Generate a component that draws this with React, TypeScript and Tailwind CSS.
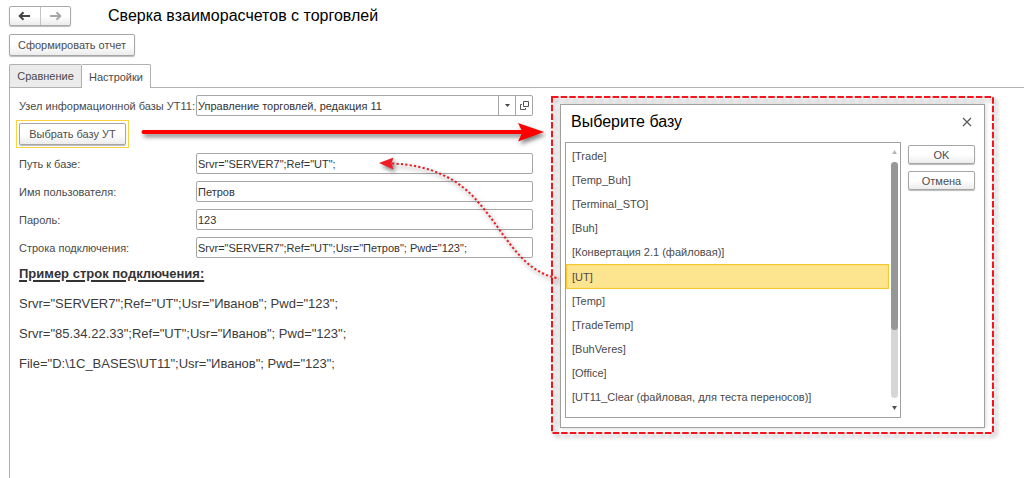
import { useState } from "react"
import { clsx } from "clsx"

const bases = [
    "[Trade]",
    "[Temp_Buh]",
    "[Terminal_STO]",
    "[Buh]",
    "[Конвертация 2.1 (файловая)]",
    "[UT]",
    "[Temp]",
    "[TradeTemp]",
    "[BuhVeres]",
    "[Office]",
    "[UT11_Clear (файловая, для теста переносов)]",
]

const fields = [
    { id: "path", label: "Путь к базе:", value: 'Srvr="SERVER7";Ref="UT";' },
    { id: "user", label: "Имя пользователя:", value: "Петров" },
    { id: "password", label: "Пароль:", value: "123" },
    { id: "connection", label: "Строка подключения:", value: 'Srvr="SERVER7";Ref="UT";Usr="Петров"; Pwd="123";' },
]

const examples = [
    'Srvr="SERVER7";Ref="UT";Usr="Иванов"; Pwd="123";',
    'Srvr="85.34.22.33";Ref="UT";Usr="Иванов"; Pwd="123";',
    'File="D:\\1C_BASES\\UT11";Usr="Иванов"; Pwd="123";',
]

const buttonStyle =
    "rounded-xs border border-[#a6a6a6] bg-linear-to-b from-white from-50% to-[#ececec] text-[#4d4d4d] shadow-[0_1px_1px_#bbb]"

function NavButtons() {
    return (
        <div className="flex h-5 w-[62px] rounded-xs border border-[#a9a9a9] bg-linear-to-b from-white from-50% to-[#ececec] shadow-[0_1px_1px_#bbb]">
            <button aria-label="Назад" className="flex flex-1 items-center justify-center border-r border-[#c4c4c4]">
                <svg width="13" height="10" viewBox="0 0 13 10" fill="none" stroke="#454545" strokeWidth="2">
                    <path d="M12 5H2M5.5 1.2L1.7 5l3.8 3.8" />
                </svg>
            </button>
            <button aria-label="Вперед" className="flex flex-1 items-center justify-center">
                <svg width="13" height="10" viewBox="0 0 13 10" fill="none" stroke="#a8a8a8" strokeWidth="2">
                    <path d="M1 5h10M7.5 1.2L11.3 5 7.5 8.8" />
                </svg>
            </button>
        </div>
    )
}

function BaseDialog() {
    const [selected, setSelected] = useState("[UT]")

    return (
        <div className="relative w-[443px] shrink-0 px-[9px] pt-2 pb-[6px]">
            {/* Пунктирная рамка */}
            <svg className="absolute inset-0 h-full w-full overflow-visible drop-shadow-[3px_3px_2px_rgba(0,0,0,0.35)]">
                <rect x="1" y="1" width="441" height="336" fill="none" stroke="#f5141b" strokeWidth="2" strokeDasharray="6.5 2.15" />
            </svg>

            <div role="dialog" aria-labelledby="dialog-title" className="relative border border-[#a0a0a0] bg-white px-1 pb-[9px] shadow-[0_0_5px_rgba(0,0,0,0.2)]">
                <div className="flex h-[37px] items-center justify-between pr-2 pb-[3px] pl-[6px]">
                    <h2 id="dialog-title" className="text-base leading-4 text-black">Выберите базу</h2>
                    <button aria-label="Закрыть">
                        <svg width="10" height="10" viewBox="0 0 10 10" stroke="#555" strokeWidth="1.2">
                            <path d="M1 1l8 8M9 1L1 9" />
                        </svg>
                    </button>
                </div>
                <div className="flex gap-[7px]">
                    <div className="flex h-[276px] w-[336px] border border-[#a0a0a0]">
                        <ul role="listbox" aria-label="Базы" className="flex-1 pt-px">
                            {bases.map((base) => (
                                <li
                                    key={base}
                                    role="option"
                                    aria-selected={base === selected}
                                    onClick={() => setSelected(base)}
                                    className={clsx(
                                        "flex items-center pl-[5px]",
                                        base === selected ? "h-[25px] border border-[#f8c82a] bg-[#fde590] shadow-[inset_0_0_1px_#f8c82a]" : "h-6 border-l border-transparent",
                                    )}
                                >
                                    {base}
                                </li>
                            ))}
                        </ul>
                        <div className="flex w-[11px] flex-col items-center pt-[7px] pb-[7px]">
                            <svg width="5" height="4" viewBox="0 0 5 4" fill="#b5b5b5">
                                <path d="M2.5 0L5 4H0z" />
                            </svg>
                            <div className="mt-2 mb-2 w-[7px] flex-1 rounded-full bg-[#d6d6d6]">
                                <div className="h-[168px] rounded-full bg-[#979797]"></div>
                            </div>
                            <svg width="5" height="4" viewBox="0 0 5 4" fill="#505050">
                                <path d="M0 0h5L2.5 4z" />
                            </svg>
                        </div>
                    </div>
                    <div className="flex flex-1 flex-col gap-[7px] pt-[3px] pr-[5px]">
                        <button className={clsx(buttonStyle, "h-[19px]")}>OK</button>
                        <button className={clsx(buttonStyle, "h-[19px]")}>Отмена</button>
                    </div>
                </div>
            </div>
        </div>
    )
}

function Arrows() {
    return (
        <svg
            className="pointer-events-none absolute top-0 left-0 drop-shadow-[2px_3px_2px_rgba(0,0,0,0.5)]"
            width="570"
            height="210"
            viewBox="10 88 570 210"
            fill="none"
        >
            <path d="M143.500 132H524" stroke="#fe0000" strokeWidth="4" strokeLinecap="round" />
            <path d="M518 123l26 9-26 9.500 4.500-9.500z" fill="#fe0000" />
            <path
                d="M392 163.500C432 165 460 180 478 202C505 232 520 272 559 278.500"
                stroke="#ee1c24"
                strokeWidth="2"
                strokeDasharray="2.200 2.200"
            />
            <path d="M379 163l14.500-5.500-2 5.700 2 6.300z" fill="#ee1c24" />
        </svg>
    )
}

export default function App() {
    const [node, setNode] = useState("Управление торговлей, редакция 11")

    return (
        <div className="flex min-h-screen flex-col bg-white pt-[6px] pl-[9px] font-['Liberation_Sans',Arial,sans-serif] text-[11px] leading-4 text-[#4a4a4a]">
            <header className="flex h-5 items-center gap-[37px]">
                <NavButtons />
                <h1 className="text-base text-black">Сверка взаиморасчетов с торговлей</h1>
            </header>

            <div className="mt-2">
                <button className={clsx(buttonStyle, "h-[22px] w-[126px]")}>Сформировать отчет</button>
            </div>

            <div role="tablist" className="mt-2 flex h-6">
                <button role="tab" aria-selected="false" className="h-[23px] w-[72px] rounded-tl-xs border border-r-0 border-b-0 border-[#b0b0b0] bg-[#ebebeb]">
                    Сравнение
                </button>
                <button role="tab" aria-selected="true" className="relative z-10 h-6 w-[70px] rounded-t-xs border border-b-0 border-[#b0b0b0] bg-white">
                    Настройки
                </button>
            </div>

            <main className="relative -mt-px flex flex-1 items-start gap-[18px] border-t border-l border-[#b0b0b0] pt-2 pr-[30px] pl-[9px]">
                <form className="-mt-px min-w-0 flex-1" onSubmit={(e) => e.preventDefault()}>
                    <div className="flex h-[21px] items-center">
                        <label htmlFor="node" className="w-[177px] shrink-0 whitespace-nowrap">Узел информационной базы УТ11:</label>
                        <div className="flex h-[21px] min-w-0 flex-1 rounded-xs border border-[#a6a6a6]">
                            <input
                                id="node"
                                value={node}
                                onChange={(e) => setNode(e.target.value)}
                                className="min-w-0 flex-1 px-px text-[#333] outline-none"
                            />
                            <button type="button" aria-label="Выбрать из списка" className="flex w-[17px] items-center justify-center border-l border-[#a6a6a6]">
                                <svg width="5" height="3" viewBox="0 0 5 3" fill="#444">
                                    <path d="M0 0h5L2.500 3z" />
                                </svg>
                            </button>
                            <button type="button" aria-label="Открыть" className="flex w-[17px] items-center justify-center border-l border-[#a6a6a6]">
                                <svg width="9" height="9" viewBox="0 0 9 9" fill="none" stroke="#555">
                                    <path d="M3.500.5h5v5h-5zM2 3.500H.5v5h5V7" />
                                </svg>
                            </button>
                        </div>
                    </div>

                    <div className="mt-1 -ml-[3px] w-[113px] border border-[#fbd341] p-[2px]">
                        <button type="button" className={clsx(buttonStyle, "h-[22px] w-full")}>Выбрать базу УТ</button>
                    </div>

                    <div className="mt-[5px] flex flex-col gap-[7px]">
                        {fields.map((field) => (
                            <div key={field.id} className="flex h-[21px] items-center">
                                <label htmlFor={field.id} className="w-[177px] shrink-0">{field.label}</label>
                                <input
                                    id={field.id}
                                    defaultValue={field.value}
                                    className="h-[21px] min-w-0 flex-1 rounded-xs border border-[#a6a6a6] px-px text-[#333] outline-none"
                                />
                            </div>
                        ))}
                    </div>

                    <h3 className="mt-[6px] text-[13px] leading-5 font-bold text-[#333] underline decoration-2 underline-offset-2">Пример строк подключения:</h3>
                    {examples.map((example) => (
                        <p key={example} className="mt-[10px] text-[13px] leading-5 whitespace-nowrap text-[#3c3c3c]">{example}</p>
                    ))}
                </form>

                <BaseDialog />
                <Arrows />
            </main>
        </div>
    )
}
